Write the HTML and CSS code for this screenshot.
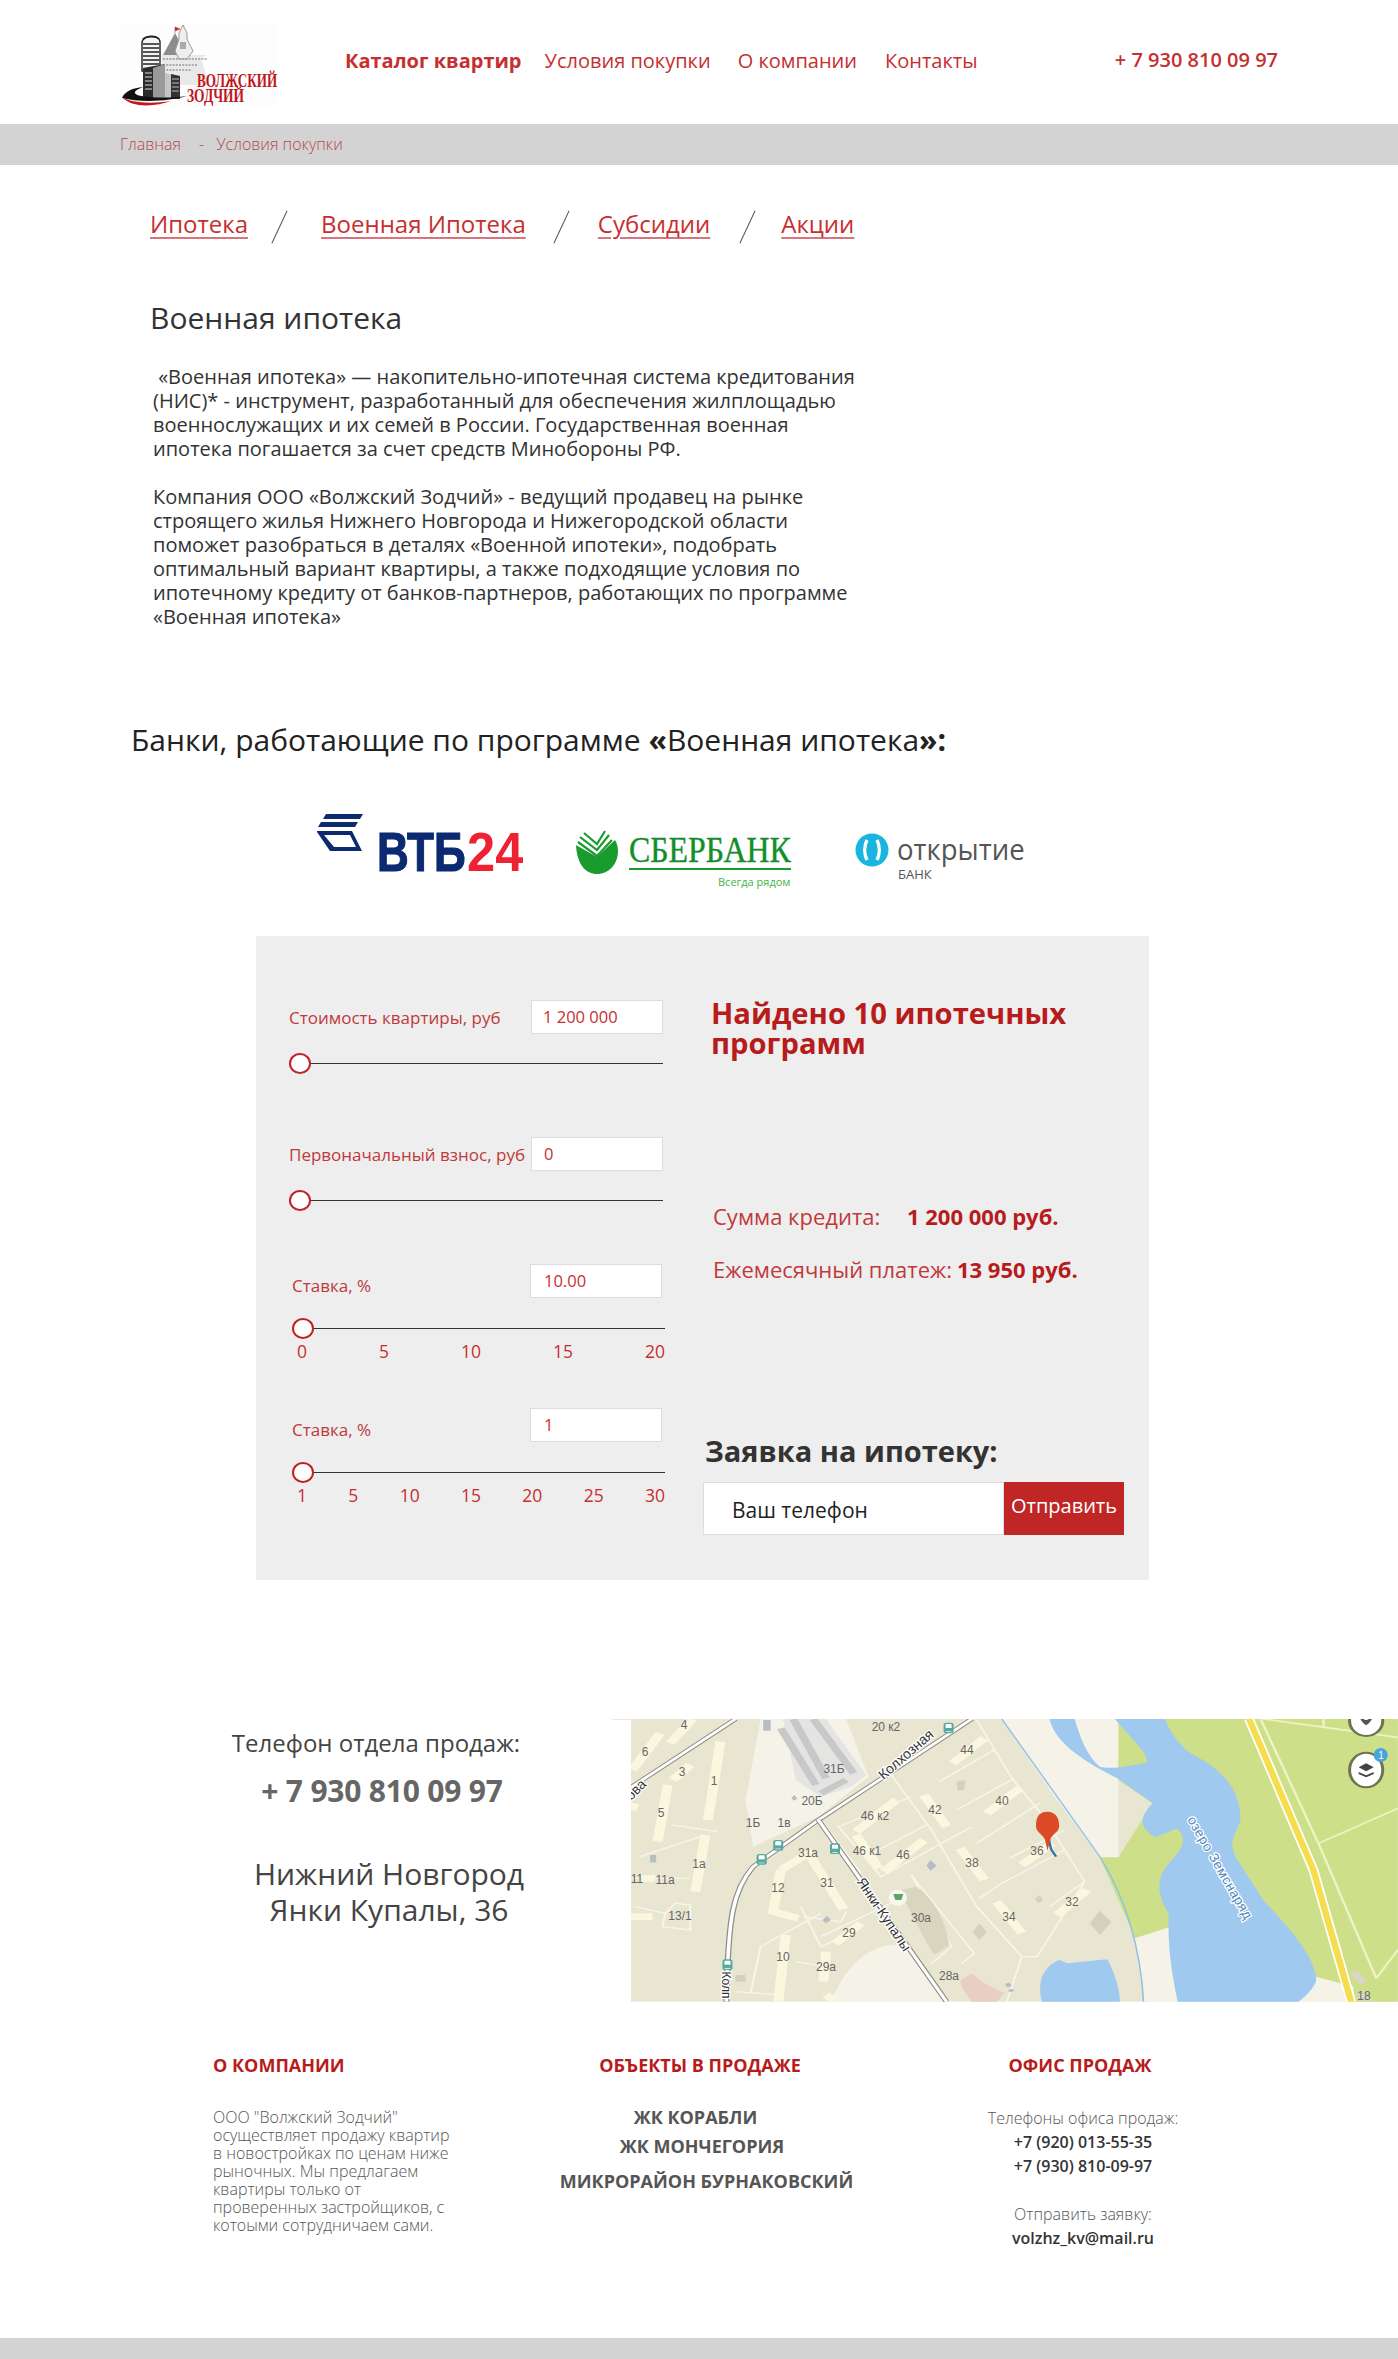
FILE: index.html
```html
<!DOCTYPE html>
<html lang="ru">
<head>
<meta charset="utf-8">
<title>Военная ипотека</title>
<link rel="stylesheet" href="styles.css">
</head>
<body>
<header class="header">
  <svg class="logo" viewBox="0 0 157 81" width="157" height="81" aria-label="Волжский Зодчий">
    <rect width="157" height="81" fill="#fdfdfd"/>
    <path d="M40 30H86L80 33L88 60H44Z" fill="#e9e9e9"/>
    <path d="M54 8L42 30H66Z" fill="#8d8d8d"/>
    <path d="M54 8V2L59 4L54 6" fill="#c62828" stroke="#c62828" stroke-width=".5"/>
    <path d="M62 0L66 8V14L72 26L66 34H58L54 26L58 14V8Z" fill="#eee" stroke="#999" stroke-width="1"/>
    <path d="M59 17H65V24H59Z" fill="#aaa"/>
    <path d="M42 34H86M42 40H76M42 45H70" stroke="#999" stroke-width="1.6" stroke-dasharray="2 1.2"/>
    <path d="M21 18C21 9 39 9 39 17V46H21Z" fill="#f4f4f4" stroke="#222" stroke-width="1.4"/>
    <path d="M22 14C26 11 35 11 38 14M22 19H38M22 23H38M22 27H38M22 31H38M22 35H38M22 39H38" fill="none" stroke="#222" stroke-width="1.6"/>
    <path d="M22 43L44 39V74H22Z" fill="#2b2b2b"/>
    <path d="M32 43L44 39V74H32Z" fill="#9a9a9a"/>
    <path d="M24 48H31M24 52H31M24 56H31M24 60H31M24 64H31" stroke="#ddd" stroke-width="1"/>
    <path d="M44 48L59 51V74H44Z" fill="#c5c5c5"/>
    <path d="M50 49L59 51V74H50Z" fill="#333"/>
    <path d="M51 54H58M51 58H58M51 62H58M51 66H58" stroke="#bbb" stroke-width="1"/>
    <path d="M1 73C4 66 12 63 22 62C12 66 11 69 20 71C34 73 50 73 66 71C50 76 20 78 1 73Z" fill="#111"/>
    <path d="M1 72C10 78 30 79 50 76C34 82 10 83 1 72Z" fill="#c8161d"/>
    <text class="logo-line" transform="translate(76 62) scale(.73 1)">ВОЛЖСКИЙ</text>
    <text class="logo-line" transform="translate(66 77) scale(.75 1)">ЗОДЧИЙ</text>
  </svg>
  <nav class="nav">
    <a class="nav-link nav-link--strong">Каталог квартир</a>
    <a class="nav-link">Условия покупки</a>
    <a class="nav-link nav-link--wide">О компании</a>
    <a class="nav-link">Контакты</a>
  </nav>
  <a class="header-phone">+ 7 930 810 09 97</a>
</header>

<div class="crumbs"><span>Главная</span><span class="crumb-sep">-</span><span>Условия покупки</span></div>

<main>
  <div class="tabs">
    <a class="tab">Ипотека</a><i class="tab-slash tab-slash--a"></i>
    <a class="tab">Военная Ипотека</a><i class="tab-slash"></i>
    <a class="tab">Субсидии</a><i class="tab-slash tab-slash--c"></i>
    <a class="tab">Акции</a>
  </div>

  <h1 class="page-title">Военная ипотека</h1>
  <p class="lead">&nbsp;«Военная ипотека» — накопительно-ипотечная система кредитования<br>(НИС)* - инструмент, разработанный для обеспечения жилплощадью<br>военнослужащих и их семей в России. Государственная военная<br>ипотека погашается за счет средств Минобороны РФ.<br><br>Компания ООО «Волжский Зодчий» - ведущий продавец на рынке<br>строящего жилья Нижнего Новгорода и Нижегородской области<br>поможет разобраться в деталях «Военной ипотеки», подобрать<br>оптимальный вариант квартиры, а также подходящие условия по<br>ипотечному кредиту от банков-партнеров, работающих по программе<br>«Военная ипотека»</p>

  <h2 class="banks-title">Банки, работающие по программе <b>«</b>Военная ипотека<b>»:</b></h2>

  <div class="banks">
    <svg class="bank bank--vtb" viewBox="317 815 206 75" aria-label="ВТБ24">
      <path fill-rule="evenodd" d="M326 815H363L360 820H323ZM321 823H358L355 828H318ZM317 832H352L362 852H330L317 833ZM324 836L334 848H356L350 836Z" fill="#0b2a70"/>
      <text class="vtb-a" transform="translate(377 872) scale(.8 1)">ВТБ</text>
      <text class="vtb-b" transform="translate(467 872) scale(.92 1)">24</text>
    </svg>
    <svg class="bank bank--sber" viewBox="575 815 217 75" aria-label="Сбербанк">
      <path d="M576 846C577 866 586 875 597 875C609 875 618 865 618 852C618 848 617 844 615 841L597 858Z" fill="#1a9b2e"/>
      <path d="M578 843L597 857L612 841M580 838L597 851L609 836M584 834L597 845L605 832" fill="none" stroke="#1a9b2e" stroke-width="2.2"/>
      <text class="sber-name" transform="translate(629 863) scale(.91 1)">СБЕРБАНК</text>
      <rect x="629" y="869" width="162" height="2" fill="#1a9b2e"/>
      <text class="sber-sub" x="718" y="887">Всегда рядом</text>
    </svg>
    <svg class="bank bank--open" viewBox="855 815 172 75" aria-label="Открытие банк">
      <circle cx="872" cy="851" r="16.5" fill="#19b5e0"/>
      <path d="M867 841C864 847 864 855 867 861M877 841C880 847 880 855 877 861" stroke="#fff" stroke-width="3.4" fill="none"/>
      <text class="open-name" transform="translate(897 861) scale(.95 1)">открытие</text>
      <text class="open-sub" x="898" y="880">БАНК</text>
    </svg>
  </div>

  <section class="calc">
    <div class="calc-left">
      <div class="field field--first">
        <div class="field-head"><span class="field-label">Стоимость квартиры, руб</span><span class="field-input">1 200 000</span></div>
        <div class="slider"><i class="knob"></i></div>
      </div>
      <div class="field field--second">
        <div class="field-head"><span class="field-label">Первоначальный взнос, руб</span><span class="field-input field-input--pad">0</span></div>
        <div class="slider"><i class="knob"></i></div>
      </div>
      <div class="field field--third field--shift">
        <div class="field-head"><span class="field-label field-label--low">Ставка, %</span><span class="field-input field-input--pad">10.00</span></div>
        <div class="slider slider--gap"><i class="knob"></i></div>
        <div class="ticks"><span>0</span><span>5</span><span>10</span><span>15</span><span>20</span></div>
      </div>
      <div class="field field--fourth field--shift">
        <div class="field-head"><span class="field-label field-label--low">Ставка, %</span><span class="field-input field-input--pad">1</span></div>
        <div class="slider slider--gap"><i class="knob"></i></div>
        <div class="ticks"><span>1</span><span>5</span><span>10</span><span>15</span><span>20</span><span>25</span><span>30</span></div>
      </div>
    </div>
    <div class="calc-right">
      <h3 class="found">Найдено 10 ипотечных<br>программ</h3>
      <p class="sum sum--credit"><span class="sum-label sum-label--wide">Сумма кредита:</span><b>1 200 000 руб.</b></p>
      <p class="sum sum--month"><span class="sum-label">Ежемесячный платеж:</span> <b>13 950 руб.</b></p>
      <h3 class="apply">Заявка на ипотеку:</h3>
      <div class="apply-form"><span class="apply-input">Ваш телефон</span><span class="apply-btn">Отправить</span></div>
    </div>
  </section>

  <section class="contact">
    <div class="contact-info">
      <p class="contact-label">Телефон отдела продаж:</p>
      <p class="contact-phone">+ 7 930 810 09 97</p>
      <p class="contact-city">Нижний Новгород<br>Янки Купалы, 36</p>
    </div>
    <svg class="map" viewBox="-19 0 786 283" width="786" height="283" aria-label="Карта">
      <rect x="-19" y="0" width="19" height="1" fill="#eeeadb"/>
      <defs><clipPath id="mapclip"><rect width="767" height="283"/></clipPath></defs>
      <g clip-path="url(#mapclip)">
        <g transform="scale(0.5025 0.3333) translate(-42 -57)">
          <rect x="42" y="57" width="1526" height="848" fill="#e8e5d1"/>
          <path d="M780 57H1012V472H975L880 280Z" fill="#f5f3e8"/>
          <path d="M1012 57H1568V905H1480L1400 830L1130 680L1045 715L975 472H1012L1055 370L1080 310L1012 240Z" fill="#cde089"/>
          <path d="M1045 715L1115 680L1135 905H1062Z" fill="#f5f3e8"/>
          <path d="M1405 830L1480 860V905H1370Z" fill="#f5f3e8"/>
          <path d="M300 57H470L515 230L415 350L285 440L270 300Z" fill="#f5f3e8"/>
          <path d="M440 905C480 760 540 720 590 740L680 905Z" fill="#f5f3e8"/>
          <path d="M345 57H430L510 225L480 260L420 290L370 240Z" fill="#e4e4e2"/>
          <path d="M365 57L430 235M340 85L410 255M405 57L485 220M420 280L470 240" stroke="#c8c8c8" stroke-width="16" fill="none"/>
          <path d="M875 57H925C935 110 950 170 975 200C1000 210 1040 195 1068 188C1075 165 1040 120 1005 57H1105C1120 120 1150 160 1180 180C1235 230 1255 290 1255 360C1245 410 1230 420 1245 470L1300 600C1350 680 1410 780 1405 845C1395 880 1370 905 1370 905H1130C1115 800 1110 720 1112 640C1090 590 1085 540 1110 495C1140 440 1150 430 1130 385L1085 412C1050 380 1055 350 1080 310L1010 235C950 190 885 130 875 57Z" fill="#9fc9ef"/>
          <path d="M860 905C850 850 860 800 895 780L910 790L990 778C1005 820 1015 870 1015 905Z" fill="#9fc9ef"/>
          <path d="M780 57L975 470C1020 580 1055 720 1062 905" fill="none" stroke="#8fbfe6" stroke-width="3"/>
          <g fill="none" stroke="#eef2c4" stroke-width="5">
            <path d="M1300 57L1568 112M1420 57V80M1295 57L1410 430L1525 835M1410 430L1568 325M1525 835L1568 750"/>
          </g>
          <path d="M1272 57L1400 510L1475 905" fill="none" stroke="#fff" stroke-width="20"/>
          <path d="M1272 57L1400 510L1475 905" fill="none" stroke="#f5dd4e" stroke-width="13"/>
          <path d="M1480 815L1500 850M1490 880L1510 905" stroke="#d9d6c2" stroke-width="18"/>
          <g fill="none" stroke="#f7f5e9" stroke-width="4">
            <path d="M560 225L640 390L730 620L820 770H850L945 545L905 450L855 335L800 235L730 60"/>
            <path d="M655 245L765 150M690 330L805 235M730 430L855 310M795 475L905 390M780 550L905 450M735 595L780 550M875 620L945 545M600 290L455 380L540 530L720 380M630 375L515 465M600 525L680 740L640 790M600 525L725 760L700 790M820 770L790 905M420 360L500 520M385 650L460 665L470 635M380 620L420 740L450 720M420 710L600 580M370 785L430 800M250 875L340 885M280 880L300 740L420 640M60 470L180 410M50 620L110 640M40 535L160 535M125 375L215 395M110 640L130 610L160 615L160 690L105 680Z"/>
          </g>
          <g fill="none" stroke="#faf7de" stroke-width="20">
            <path d="M682 190L745 115M750 340L815 265M625 285L670 380M490 395L570 300M490 405L535 505M545 515L625 420M697 445L745 540M820 495L880 430M770 605L820 700M890 645L950 570"/>
            <path d="M340 510L395 460L465 628M340 510L325 635L375 655M350 705L335 905M448 730L500 670M430 755L425 845M220 125L195 360M190 405L170 575M115 255L95 425M100 100L45 210M165 57L120 130M160 195L125 240M42 650H85M50 310L42 330M430 885L450 905M60 535H90"/>
          </g>
          <path d="M610 560C650 600 670 680 675 735L645 765C620 700 590 620 580 570Z" fill="#d9d6c0"/>
          <g fill="#d3d0bb">
            <path d="M690 245L707 240L705 270L692 272Z"/>
            <path d="M735 670L750 695L735 720L722 695Z"/>
            <path d="M975 632L998 665L975 705L955 670Z"/>
            <path d="M855 585L862 600L852 610L846 597Z"/>
            <path d="M250 825H270V845H250Z"/>
          </g>
          <g fill="#b8bcc4">
            <path d="M638 480L650 497L638 512L630 497Z"/>
            <path d="M432 648L440 660L430 670L423 660Z"/>
            <path d="M80 465H92V487H80Z"/>
            <path d="M305 60H320V92H305Z"/>
            <path d="M367 285L373 295L367 302L361 295Z"/>
          </g>
          <path d="M720 820L745 850L785 880L770 905H720L700 860L698 842Z" fill="#e8cfc2"/>
          <path d="M790 850L796 860M797 868L800 875" stroke="#b8bcc4" stroke-width="10"/>
          <path d="M720 57L415 360L285 500C245 570 235 650 232 905" fill="none" stroke="#8e8e86" stroke-width="12"/>
          <path d="M720 57L415 360L285 500C245 570 235 650 232 905" fill="none" stroke="#fff" stroke-width="7"/>
          <path d="M415 360L670 905" fill="none" stroke="#8e8e86" stroke-width="12"/>
          <path d="M415 360L670 905" fill="none" stroke="#fff" stroke-width="7"/>
          <path d="M250 57L42 262" fill="none" stroke="#8e8e86" stroke-width="12"/>
          <path d="M250 57L42 262" fill="none" stroke="#fff" stroke-width="7"/>
          <g fill="#fff" stroke="#58a8a0" stroke-width="4">
            <rect x="666" y="70" width="16" height="28" rx="4"/>
            <rect x="327" y="422" width="16" height="28" rx="4"/>
            <rect x="294" y="464" width="16" height="28" rx="4"/>
            <rect x="440" y="432" width="16" height="28" rx="4"/>
            <rect x="226" y="780" width="16" height="28" rx="4"/>
          </g>
          <g fill="#58a8a0">
            <rect x="666" y="84" width="16" height="10"/>
            <rect x="327" y="436" width="16" height="10"/>
            <rect x="294" y="478" width="16" height="10"/>
            <rect x="440" y="446" width="16" height="10"/>
            <rect x="226" y="794" width="16" height="10"/>
          </g>
          <ellipse cx="573" cy="593" rx="18" ry="24" fill="#f8f7ee"/>
          <path d="M564 582H584L580 600H568Z" fill="#5ca56a"/>
          <path d="M870 395L878 448L888 470" fill="none" stroke="#2f77a8" stroke-width="5"/>
          <path d="M870 335C890 335 895 360 894 382C892 398 880 402 876 420L871 452L866 420C862 402 848 398 848 378C848 355 852 335 870 335Z" fill="#dc4a26"/>
          <ellipse cx="1505" cy="62" rx="33" ry="46" fill="#fff" stroke="#6d7350" stroke-width="6"/>
          <path d="M1505 40C1520 40 1522 58 1505 76C1488 58 1490 40 1505 40Z" fill="#555"/>
          <ellipse cx="1505" cy="52" rx="6" ry="8" fill="#fff"/>
          <ellipse cx="1505" cy="210" rx="33" ry="52" fill="#fff" stroke="#6d7350" stroke-width="6"/>
          <path d="M1490 202L1505 190L1520 202L1505 214ZM1490 216L1505 226L1520 216L1520 222L1505 232L1490 222Z" fill="#444"/>
          <ellipse cx="1534" cy="165" rx="14" ry="21" fill="#47a5dc"/>
        </g>
        <g class="map-labels">
          <text x="53" y="10">4</text><text x="14" y="37">6</text><text x="51" y="57">3</text><text x="83" y="66">1</text>
          <text x="30" y="98">5</text><text x="68" y="149">1а</text><text x="6" y="164">11</text><text x="34" y="165">11а</text>
          <text x="49" y="201">13/1</text><text x="122" y="108">1Б</text><text x="153" y="108">1в</text><text x="177" y="138">31а</text>
          <text x="196" y="168">31</text><text x="147" y="173">12</text><text x="218" y="218">29</text><text x="152" y="242">10</text>
          <text x="195" y="252">29а</text><text x="318" y="261">28а</text><text x="290" y="203">30а</text><text x="378" y="202">34</text>
          <text x="341" y="148">38</text><text x="406" y="136">36</text><text x="441" y="187">32</text><text x="371" y="86">40</text>
          <text x="304" y="95">42</text><text x="336" y="35">44</text><text x="244" y="101">46 к2</text><text x="236" y="136">46 к1</text>
          <text x="272" y="140">46</text><text x="203" y="54">31Б</text><text x="181" y="86">20Б</text><text x="255" y="12">20 к2</text>
          <text x="733" y="281">18</text>
          <text class="map-badge" x="750" y="40">1</text>
        </g>
        <text class="map-road" transform="translate(278 39) rotate(-41)">Колхозная</text>
        <text class="map-road" transform="translate(249 198) rotate(56)">Янки-Купалы</text>
        <text class="map-road map-road--small" transform="translate(91 266) rotate(90)">Колп</text>
        <text class="map-road" transform="translate(8 74) rotate(-45)">ова</text>
        <text class="map-lake" transform="translate(585 151) rotate(60)">озеро Земснаряд</text>
      </g>
    </svg>
  </section>
</main>

<footer class="footer">
  <div class="footer-grid">
    <div class="footer-col">
      <h4 class="footer-title">О КОМПАНИИ</h4>
      <p class="footer-about">ООО "Волжский Зодчий"<br>осуществляет продажу квартир<br>в новостройках по ценам ниже<br>рыночных. Мы предлагаем<br>квартиры только от<br>проверенных застройщиков, с<br>котоыми сотрудничаем сами.</p>
    </div>
    <div class="footer-col footer-col--objects">
      <h4 class="footer-title footer-title--objects">ОБЪЕКТЫ В ПРОДАЖЕ</h4>
      <a class="object object--a">ЖК КОРАБЛИ</a>
      <a class="object object--b">ЖК МОНЧЕГОРИЯ</a>
      <a class="object object--c">МИКРОРАЙОН БУРНАКОВСКИЙ</a>
    </div>
    <div class="footer-col footer-col--office">
      <h4 class="footer-title footer-title--office">ОФИС ПРОДАЖ</h4>
      <p class="office-label">Телефоны офиса продаж:</p>
      <p class="office-value">+7 (920) 013-55-35</p>
      <p class="office-value">+7 (930) 810-09-97</p>
      <p class="office-label office-label--gap">Отправить заявку:</p>
      <p class="office-value">volzhz_kv@mail.ru</p>
    </div>
  </div>
  <div class="footer-bar"></div>
</footer>
</body>
</html>
```

FILE: styles.css
```css
* { box-sizing: border-box; }
html, body { margin: 0; padding: 0; }
body {
  width: 1398px;
  height: 2359px;
  overflow: hidden;
  background: #fff;
  font-family: "Open Sans", "Noto Sans", sans-serif;
  color: #333;
}
h1, h2, h3, h4, p { margin: 0; font-weight: 400; }

/* header */
.header {
  display: flex;
  align-items: flex-start;
  height: 124px;
  padding: 25px 120px 0 121px;
}
.logo { display: block; flex: none; }
.logo-line {
  font-family: "Liberation Serif", serif;
  font-weight: 700;
  font-size: 18px;
  fill: #c0161d;
}
.nav { display: flex; margin-left: 67px; margin-top: 21px; }
.nav-link {
  font-size: 20px;
  line-height: 30px;
  color: #c62f2f;
  margin-right: 27px;
  white-space: nowrap;
}
.nav-link--strong { font-weight: 700; margin-right: 23px; }
.nav-link--wide { margin-right: 28px; }
.header-phone {
  margin-left: auto;
  margin-top: 20px;
  font-size: 20px;
  line-height: 30px;
  font-weight: 600;
  color: #c62f2f;
  white-space: nowrap;
}
.crumbs {
  height: 41px;
  padding-left: 120px;
  background: #d3d3d3;
  font-size: 16px;
  font-weight: 300;
  line-height: 41px;
  color: #b5474a;
}
.crumb-sep { margin: 0 12px 0 18px; }

/* tabs */
.tabs {
  display: flex;
  align-items: center;
  height: 40px;
  margin-top: 39px;
  padding-left: 150px;
}
.tab {
  font-size: 24px;
  line-height: 32px;
  color: #c62f2f;
  text-decoration: underline;
  text-decoration-color: #d9757a;
  text-decoration-thickness: 2px;
  text-underline-offset: 4px;
}
.tab-slash {
  display: block;
  width: 1px;
  height: 36px;
  margin: 6px 36px 0 35px;
  background: #555;
  transform: rotate(25deg);
}
.tab-slash--a { margin-left: 31px; margin-right: 41px; }
.tab-slash--c { margin-left: 37px; margin-right: 33px; }
.page-title {
  margin: 54px 0 0 150px;
  font-size: 30px;
  line-height: 40px;
  color: #333;
}
.lead {
  margin: 27px 0 0 153px;
  font-size: 20px;
  line-height: 24px;
  color: #333;
  white-space: nowrap;
}
.banks-title {
  margin: 89px 0 0 131px;
  font-size: 30px;
  line-height: 44px;
  color: #222;
}
.banks {
  display: flex;
  height: 75px;
  margin-top: 52px;
  padding-left: 317px;
}
.bank { display: block; height: 75px; flex: none; }
.bank--vtb { width: 206px; margin-right: 52px; }
.bank--sber { width: 217px; margin-right: 63px; }
.bank--open { width: 172px; }
.vtb-a { font-family: "Liberation Sans", sans-serif; font-weight: 700; font-size: 55px; fill: #0b2a70; stroke: #0b2a70; stroke-width: 1.2px; }
.vtb-b { font-family: "Liberation Sans", sans-serif; font-weight: 700; font-size: 55px; fill: #ee2233; }
.sber-name { font-family: "Liberation Serif", serif; font-size: 35px; fill: #128f2a; stroke: #128f2a; stroke-width: .4px; }
.sber-sub { font-family: "Open Sans", sans-serif; font-size: 11px; fill: #3fb34a; }
.open-name { font-family: "Open Sans", sans-serif; font-size: 29px; fill: #555; }
.open-sub { font-family: "Open Sans", sans-serif; font-size: 13px; fill: #555; }

/* calculator */
.calc {
  display: flex;
  width: 893px;
  height: 644px;
  margin: 47px 0 0 256px;
  background: #eee;
}
.calc-left { width: 447px; padding: 64px 0 0 33px; }
.field { width: 374px; }
.field--second { margin-top: 63px; }
.field--third { margin-top: 53px; }
.field--fourth { margin-top: 47px; }
.field--shift { margin-left: 3px; width: 373px; }
.field--shift .field-input { margin-right: 3px; padding-left: 13px; }
.field-head {
  display: flex;
  justify-content: space-between;
  align-items: center;
  height: 34px;
}
.field-label { font-size: 17px; color: #c0393b; white-space: nowrap; }
.field-label--low { padding-top: 8px; }
.field-input {
  display: block;
  width: 132px;
  height: 34px;
  padding-left: 11px;
  background: #fff;
  border: 1px solid #ddd;
  font-size: 16.5px;
  line-height: 31px;
  color: #c62f2f;
}
.field-input--pad { padding-left: 12px; }
.slider {
  position: relative;
  height: 21px;
  margin-top: 19px;
}
.slider--gap { margin-top: 20px; }
.slider::before {
  content: "";
  position: absolute;
  left: 0;
  right: 0;
  top: 10px;
  height: 1px;
  background: #333;
}
.knob {
  position: absolute;
  left: 0;
  top: 0;
  width: 22px;
  height: 21px;
  border: 2.5px solid #c0222a;
  border-radius: 50%;
  background: #fff;
}
.ticks {
  display: flex;
  justify-content: space-between;
  height: 20px;
  margin-top: 2px;
  padding-left: 5px;
  font-size: 17.5px;
  line-height: 20px;
  color: #c62f2f;
}
.calc-right { width: 446px; padding-top: 62px; }
.found {
  margin-left: 8px;
  font-size: 29.2px;
  line-height: 30px;
  font-weight: 700;
  color: #b71c1c;
}
.sum {
  display: flex;
  gap: 5px;
  margin-left: 10px;
  font-size: 22px;
  line-height: 30px;
  color: #c0393b;
  white-space: nowrap;
}
.sum b { font-weight: 700; color: #b71c1c; }
.sum--credit { margin-top: 143px; }
.sum--month { margin-top: 23px; }
.sum-label--wide { width: 189px; }
.apply {
  margin: 148px 0 0 2px;
  font-size: 29px;
  line-height: 38px;
  font-weight: 700;
  color: #333;
}
.apply-form { display: flex; width: 421px; height: 53px; margin-top: 12px; }
.apply-input {
  flex: 1;
  padding-left: 28px;
  background: #fff;
  border: 1px solid #ddd;
  font-size: 21px;
  line-height: 54px;
  color: #222;
}
.apply-btn {
  width: 120px;
  background: #c02626;
  color: #fff;
  font-size: 20px;
  line-height: 47px;
  text-align: center;
}

/* contact + map */
.contact { display: flex; margin-top: 139px; height: 283px; }
.contact-info { width: 612px; padding: 8px 0 0 152px; text-align: center; }
.contact-label { padding-right: 12px; font-size: 24px; line-height: 32px; color: #444; }
.contact-phone { margin-top: 11px; font-size: 30px; line-height: 42px; font-weight: 700; color: #666; letter-spacing: -.2px; }
.contact-city { margin-top: 44px; padding-left: 14px; font-size: 30px; line-height: 36px; color: #444; }
.map { display: block; flex: none; }
.map-labels text {
  font-family: "Liberation Sans", sans-serif;
  font-size: 12px;
  text-anchor: middle;
  fill: #666;
}
.map-labels .map-badge { fill: #fff; font-size: 10px; }
.map-road {
  font-family: "Liberation Sans", sans-serif;
  font-size: 14px;
  text-anchor: middle;
  fill: #333;
  stroke: #fff;
  stroke-width: 2.5px;
  paint-order: stroke;
}
.map-road--small { font-size: 12px; }
.map-lake {
  font-family: "Liberation Sans", sans-serif;
  font-size: 13.5px;
  letter-spacing: .5px;
  text-anchor: middle;
  fill: #4f86c0;
  stroke: #fff;
  stroke-width: 2.5px;
  paint-order: stroke;
}

/* footer */
.footer-grid {
  display: grid;
  grid-template-columns: 346px 416px 216px;
  height: 336px;
  padding: 48px 0 0 213px;
}
.footer-title {
  font-size: 18px;
  line-height: 30px;
  font-weight: 700;
  color: #b71c1c;
  white-space: nowrap;
}
.footer-about {
  margin-top: 28px;
  font-size: 16px;
  line-height: 18px;
  font-weight: 300;
  color: #555;
  white-space: nowrap;
}
.footer-col--objects { width: 295px; text-align: center; }
.footer-title--objects { padding-right: 13px; }
.object {
  display: block;
  font-size: 18px;
  font-weight: 700;
  color: #555;
  line-height: 28px;
  white-space: nowrap;
}
.object--a { margin-top: 23px; padding-right: 22px; }
.object--b { margin-top: 1px; padding-right: 9px; }
.object--c { margin-top: 7px; }
.footer-col--office { text-align: center; }
.footer-title--office { padding-right: 6px; }
.office-label {
  margin-top: 26px;
  font-size: 16px;
  line-height: 24px;
  font-weight: 300;
  color: #555;
  white-space: nowrap;
}
.office-value {
  font-size: 16px;
  line-height: 24px;
  font-weight: 600;
  color: #333;
  white-space: nowrap;
}
.office-label--gap { margin-top: 24px; }
.footer-bar { height: 21px; background: #d3d3d3; }
```
